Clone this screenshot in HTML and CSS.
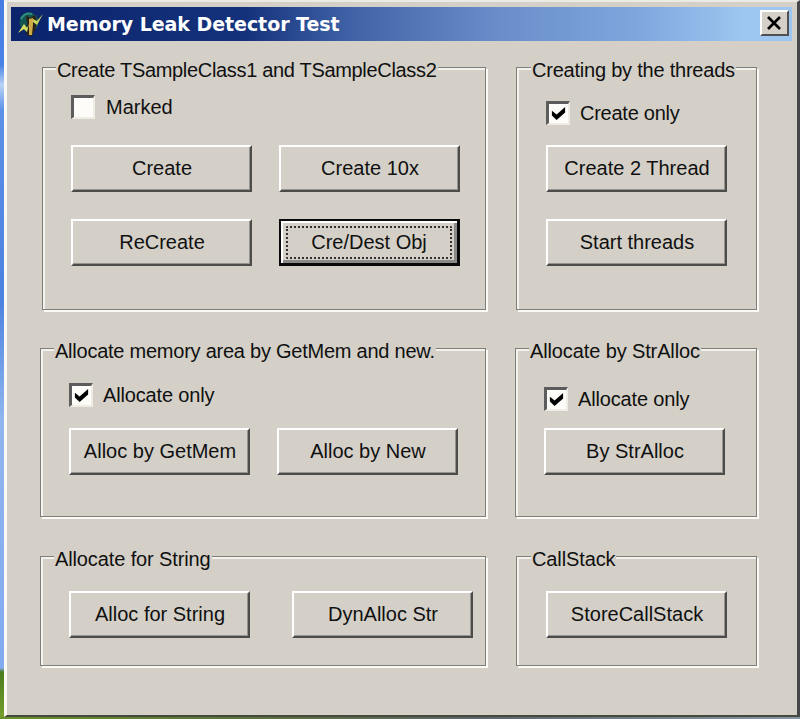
FILE: index.html
```html
<!DOCTYPE html>
<html lang="en">
<head>
<meta charset="utf-8">
<title>Memory Leak Detector Test</title>
<link rel="stylesheet" href="styles.css">
</head>
<body>
<main class="window">
  <header class="titlebar">
    <svg class="app-icon" viewBox="0 0 30 28">
      <circle cx="14" cy="12" r="9.5" fill="#155653"/>
      <path d="M6 9Q10 2 17 4" fill="none" stroke="#2f9080" stroke-width="2"/>
      <path d="M11 5L15 8L20 5L22 12L20 20L16 27L11 24L12 14Z" fill="#2a2318"/>
      <path d="M14 9L18 8L18 14L17 25L14 25Z" fill="#cfaa48"/>
      <path d="M3 23L9 14L12 18L14 14L12 22L9 19Z" fill="#d8df63"/>
      <path d="M18 9L22 11L28 4L22 15L18 12Z" fill="#cbd860"/>
    </svg>
    <h1 class="title">Memory Leak Detector Test</h1>
    <button class="close" aria-label="Close"><svg viewBox="0 0 16 14"><path d="M2 1L14 13M14 1L2 13" stroke="#000" stroke-width="2.7"/></svg></button>
  </header>
  <div class="client">
    <section class="group classes">
      <h2 class="legend">Create TSampleClass1 and TSampleClass2</h2>
      <label class="check"><span class="box"></span><span class="marked">Marked</span></label>
      <div class="buttons">
        <button class="btn">Create</button><button class="btn">Create 10x</button>
        <button class="btn">ReCreate</button><button class="btn default"><span class="focus">Cre/Dest Obj</span></button>
      </div>
    </section>
    <section class="group threads">
      <h2 class="legend">Creating by the threads</h2>
      <label class="check"><span class="box"><svg viewBox="0 0 18 18"><path d="M2 6L7 10L16 2V8L7 16L2 11Z"/></svg></span><span>Create only</span></label>
      <div class="buttons">
        <button class="btn">Create 2 Thread</button>
        <button class="btn">Start threads</button>
      </div>
    </section>
    <section class="group memory">
      <h2 class="legend">Allocate memory area by GetMem and new.</h2>
      <label class="check"><span class="box"><svg viewBox="0 0 18 18"><path d="M2 6L7 10L16 2V8L7 16L2 11Z"/></svg></span><span>Allocate only</span></label>
      <div class="buttons">
        <button class="btn">Alloc by GetMem</button><button class="btn">Alloc by New</button>
      </div>
    </section>
    <section class="group stralloc">
      <h2 class="legend">Allocate by StrAlloc</h2>
      <label class="check"><span class="box"><svg viewBox="0 0 18 18"><path d="M2 6L7 10L16 2V8L7 16L2 11Z"/></svg></span><span>Allocate only</span></label>
      <div class="buttons"><button class="btn">By StrAlloc</button></div>
    </section>
    <section class="group string">
      <h2 class="legend">Allocate for String</h2>
      <div class="buttons wide"><button class="btn">Alloc for String</button><button class="btn">DynAlloc Str</button></div>
    </section>
    <section class="group callstack">
      <h2 class="legend">CallStack</h2>
      <div class="buttons"><button class="btn">StoreCallStack</button></div>
    </section>
  </div>
</main>
</body>
</html>
```
FILE: styles.css
```css
* { box-sizing: border-box; }
body {
  margin: 0;
  height: 719px;
  overflow: hidden;
  padding-left: 4px;
  background:
    linear-gradient(90deg, #66912d, #5c713c 35%, #5c6670 60%, #8797aa) 0 717px / 800px 2px no-repeat,
    linear-gradient(#477ce0 0, #4a83e6 65px, #b9d4f6 85px, #5c91e8 110px, #4c82e0 300px, #8fb6ee 420px, #82aaf0 668px, #4b7c1d 672px, #76a02d 719px);
  font: 20px/24px "Liberation Sans", Arial, sans-serif;
  color: #101010;
}
.window {
  height: 717px;
  padding: 3px 3px 0 4px;
  background: #d4d0c8;
  border: solid;
  border-width: 2px 3px 2px 3px;
  border-color: #eceae5 #45474b #454a3d #faf9f6;
}
.titlebar {
  display: flex;
  align-items: center;
  height: 34px;
  margin-top: 2px;
  margin-right: 2px;
  padding: 0 3px 0 4px;
  background: linear-gradient(90deg, #0b246b, #14327c 30%, #4164a8 44%, #698dc9 62%, #7fa6dd 80%, #9dc6f0 94%);
}
.app-icon { width: 30px; height: 28px; }
.title {
  margin: 0 auto 0 2px;
  font: bold 19px/28px "DejaVu Sans", sans-serif;
  letter-spacing: -.05px;
  color: #fff;
  white-space: nowrap;
}
.close {
  display: flex;
  align-items: center;
  justify-content: center;
  width: 29px;
  height: 26px;
  margin-top: -2px;
  padding: 0 1px 1px 0;
  background: #d4d0c8;
  border: 2px solid;
  border-color: #fff #505050 #505050 #fff;
}
.close svg { width: 16px; height: 14px; }
.client {
  display: grid;
  grid-template-columns: 445px 241px;
  grid-template-rows: 243px 169px 110px;
  row-gap: 38px;
  column-gap: 30px;
  padding: 26px 0 0 30px;
}
.group {
  border: 1px solid #7e7e7c;
  box-shadow: 2px 2px 0 #fbfaf4, inset 2px 2px 0 #f4f2ec;
  padding-left: 28px;
}
.classes { margin-left: 1px; }
.memory, .string, .stralloc { margin-left: -1px; }
.callstack, .threads { padding-left: 29px; }
.string, .callstack { position: relative; top: 1px; }
.legend {
  width: max-content;
  margin: -10px 0 0 -15px;
  padding: 0 1px;
  font: inherit;
  background: #d4d0c8;
  white-space: nowrap;
}
.classes .legend { letter-spacing: -.32px; }
.memory .legend { letter-spacing: -.24px; }
.threads .legend { letter-spacing: -.22px; }
.string .legend, .stralloc .legend, .callstack .legend { letter-spacing: -.12px; }
.check {
  display: flex;
  align-items: center;
  gap: 10px;
  height: 24px;
  margin-top: 13px;
  letter-spacing: -.15px;
}
.marked { letter-spacing: 0; margin-left: 1px; }
.threads .check { margin-top: 19px; letter-spacing: -.25px; }
.stralloc .check { margin-top: 24px; }
.memory .check { margin-top: 20px; }
.box {
  width: 24px;
  height: 24px;
  padding: 1px;
  background: #fdfcf8;
  border: solid;
  border-width: 3px 2px 2px 3px;
  border-color: #5c5c5c #eeece4 #eeece4 #5c5c5c;
}
.box svg { display: block; width: 17px; height: 17px; }
.buttons {
  display: grid;
  grid-template-columns: repeat(auto-fill, 181px);
  gap: 27px;
  margin-top: 26px;
}
.threads .buttons { margin-top: 20px; }
.memory .buttons { margin-top: 21px; }
.stralloc .buttons { margin-top: 17px; }
.string .buttons, .callstack .buttons { margin-top: 20px; }
.wide { column-gap: 42px; }
.btn {
  height: 47px;
  padding: 0 0 2px 1px;
  font: inherit;
  color: inherit;
  background: #d4d0c8;
  border: 2px solid;
  border-color: #fff #4c4c4a #4c4c4a #fff;
  box-shadow: inset -1px -1px 0 #96948e;
  white-space: nowrap;
}
.default {
  padding: 4px;
  border: 2px solid #0a0a0a;
  border-width: 2px 3px 3px 2px;
  box-shadow: inset 2px 2px 0 #fff, inset -3px -3px 0 #8a8a88;
}
.focus { display: block; height: 33px; margin: 0 1px; border: 2px dotted #33312d; border-radius: 2px; line-height: 29px; }
```
